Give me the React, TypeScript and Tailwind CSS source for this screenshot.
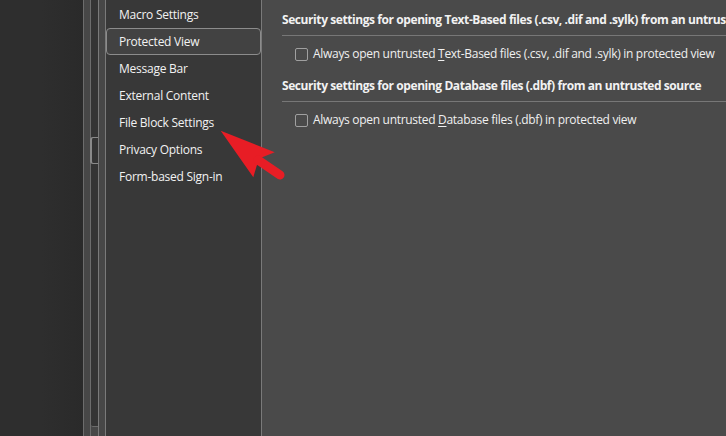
const navItems = [
  "Macro Settings",
  "Protected View",
  "Message Bar",
  "External Content",
  "File Block Settings",
  "Privacy Options",
  "Form-based Sign-in",
];

function Checkbox() {
  return <span className="w-[13px] h-[13px] shrink-0 rounded-[2px] border border-[#a0a0a0] bg-[#4a4a4a]" />;
}

function Section({ title, children }: { title: string; children: React.ReactNode }) {
  return (
    <div>
      <div className="pt-[6px] pb-[7px] border-b border-[#777] leading-[16px] text-[12px] tracking-[-0.42px] font-bold text-[#f2f2f2] whitespace-nowrap">
        {title}
      </div>
      <div className="h-[36px] flex items-center gap-[5px] pl-[13px] text-[12px] tracking-[-0.3px] text-[#f0f0f0] whitespace-nowrap">
        <Checkbox />
        <span>{children}</span>
      </div>
    </div>
  );
}

function Arrow() {
  return (
    <svg className="absolute left-0 top-0 pointer-events-none" width="726" height="436">
      <polygon points="220.7,130.7 274.7,152.3 262.3,157.3 256.7,165.7 253.3,177.3" fill="#e81d25" />
      <line x1="258" y1="160" x2="280" y2="175" stroke="#e81d25" strokeWidth="9" strokeLinecap="round" />
    </svg>
  );
}

export default function App() {
  return (
    <div
      className="relative w-[726px] h-[436px] flex overflow-hidden bg-[#2d2d2d]"
      style={{ fontFamily: '"Open Sans", "Noto Sans", sans-serif' }}
    >
      <div className="w-[83px] shrink-0 bg-gradient-to-r from-[#2e2e2e] via-[#2e2e2e] to-[#2a2a2a]" />
      <div className="w-[7px] shrink-0 border-l border-[#6c6c6c] bg-[#474747]" />
      <div className="w-[8px] shrink-0 border-l border-[#6c6c6c] bg-[#474747] flex flex-col">
        <div className="h-[427px] bg-[#343434] rounded-bl-[2px] border-b border-[#6c6c6c] flex flex-col">
          <div className="mt-[137px] h-[27px] border-l-2 border-y border-[#8a8a8a] rounded-l-[3px] -ml-[1px]" />
        </div>
      </div>
      <div className="w-[7px] shrink-0 border-l border-[#7a7a7a] bg-[#474747]" />
      <div className="w-[157px] shrink-0 border-x border-[#7a7a7a] bg-[#383838] pt-[1px]">
        {navItems.map((item, i) => (
          <div
            key={item}
            className={
              i === 1
                ? "h-[27px] flex items-center pl-[12px] text-[12px] tracking-[-0.25px] text-[#f2f2f2] border border-[#8c8c8c] rounded-[4px] bg-[#424242]"
                : "h-[27px] flex items-center pl-[13px] text-[12px] tracking-[-0.25px] text-[#f2f2f2]"
            }
          >
            {item}
          </div>
        ))}
      </div>
      <div className="flex-1 min-w-0 overflow-hidden bg-[#4a4a4a] pl-[20px] pt-[6px]">
        <div className="w-[600px]">
          <Section title="Security settings for opening Text-Based files (.csv, .dif and .sylk) from an untrusted source">
            Always open untrusted <u className="underline-offset-2">T</u>ext-Based files (.csv, .dif and .sylk) in protected view
          </Section>
          <Section title="Security settings for opening Database files (.dbf) from an untrusted source">
            Always open untrusted <u className="underline-offset-2">D</u>atabase files (.dbf) in protected view
          </Section>
        </div>
      </div>
      <Arrow />
    </div>
  );
}
